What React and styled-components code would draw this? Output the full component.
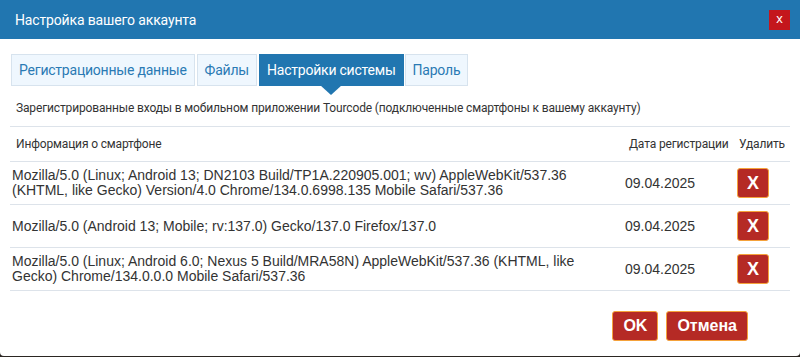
import React from 'react';
import styled, { createGlobalStyle } from 'styled-components';

const GlobalStyle = createGlobalStyle`
    html, body {
        margin: 0;
        padding: 0;
        background-color: #2b2622;
    }
    * { box-sizing: border-box; }
`;

const Dialog = styled.div`
    width: 800px;
    height: 356px;
    background-color: #ffffff;
    border-radius: 0 0 4px 4px;
    overflow: hidden;
    font-family: Roboto, "Liberation Sans", Arial, sans-serif;
    letter-spacing: -0.15px;
    color: #333333;
`;

const Header = styled.div`
    height: 39px;
    padding: 0 10px 0 15px;
    display: flex;
    align-items: center;
    justify-content: space-between;
    background-color: #2176b0;
    color: #ffffff;
    font-size: 14px;
`;

const CloseButton = styled.button`
    width: 21px;
    height: 20px;
    padding: 0 0 2px;
    border: 0;
    background-color: #c4161c;
    color: #ffffff;
    font-family: "Liberation Sans", Arial, sans-serif;
    font-size: 13px;
    line-height: 18px;
    cursor: pointer;
`;

const Body = styled.div`
    padding: 15px 10px 0;
`;

const Tabs = styled.div`
    display: flex;
    gap: 2px;
    padding-left: 1px;
`;

const Tab = styled.div`
    position: relative;
    height: 32px;
    padding: 0 7px;
    display: flex;
    align-items: center;
    font-size: 14px;
    letter-spacing: -0.22px;
    border: 1px solid ${(p) => (p.$active ? '#2176b0' : '#d7e3ee')};
    background-color: ${(p) => (p.$active ? '#2176b0' : '#eff7fe')};
    color: ${(p) => (p.$active ? '#ffffff' : '#2a7ab4')};

    ${(p) => p.$active && `
        margin-right: -1px;
        &::after {
            content: '';
            position: absolute;
            left: 50%;
            bottom: -10px;
            transform: translateX(-50%);
            border-left: 11px solid transparent;
            border-right: 11px solid transparent;
            border-top: 10px solid #2176b0;
        }
    `}
`;

const Subtitle = styled.div`
    height: 40px;
    padding: 4px 6px 0;
    display: flex;
    align-items: center;
    font-size: 12px;
`;

const Table = styled.div`
    border-top: 1px solid #dde3ea;
`;

const Row = styled.div`
    display: grid;
    grid-template-columns: 1fr 112px 57px;
    align-items: center;
    height: ${(p) => (p.$head ? '35px' : '43px')};
    border-bottom: 1px solid #dde3ea;
`;

const HeadCell = styled.div`
    font-size: 12px;
    padding-left: ${(p) => p.$pad || 6}px;
    white-space: nowrap;
`;

const Cell = styled.div`
    font-family: "Liberation Sans", Arial, sans-serif;
    font-size: 14px;
    line-height: 15px;
    letter-spacing: 0;
    padding-left: ${(p) => p.$pad || 2}px;
    padding-right: ${(p) => p.$right || 0}px;
`;

const RedButton = styled.button`
    height: ${(p) => p.$h || 30}px;
    padding: 0 ${(p) => p.$px || 9}px;
    border: 1px solid #f5a23a;
    border-radius: 3px;
    background-color: #b52a25;
    color: #ffffff;
    font-family: "Liberation Sans", Arial, sans-serif;
    font-weight: 700;
    font-size: ${(p) => p.$fs || 18}px;
    cursor: pointer;
`;

const Footer = styled.div`
    display: flex;
    justify-content: flex-end;
    gap: 8px;
    padding: 20px 42px 0 0;
`;

const devices = [
    {
        info: 'Mozilla/5.0 (Linux; Android 13; DN2103 Build/TP1A.220905.001; wv) AppleWebKit/537.36 (KHTML, like Gecko) Version/4.0 Chrome/134.0.6998.135 Mobile Safari/537.36',
        date: '09.04.2025',
    },
    {
        info: 'Mozilla/5.0 (Android 13; Mobile; rv:137.0) Gecko/137.0 Firefox/137.0',
        date: '09.04.2025',
    },
    {
        info: 'Mozilla/5.0 (Linux; Android 6.0; Nexus 5 Build/MRA58N) AppleWebKit/537.36 (KHTML, like Gecko) Chrome/134.0.0.0 Mobile Safari/537.36',
        date: '09.04.2025',
    },
];

const tabs = ['Регистрационные данные', 'Файлы', 'Настройки системы', 'Пароль'];

const App = () => {
    return (
        <Dialog>
            <GlobalStyle />
            <Header>
                <span>Настройка вашего аккаунта</span>
                <CloseButton>x</CloseButton>
            </Header>

            <Body>
                <Tabs>
                    {tabs.map((t) => (
                        <Tab key={t} $active={t === 'Настройки системы'}>{t}</Tab>
                    ))}
                </Tabs>

                <Subtitle>
                    Зарегистрированные входы в мобильном приложении Tourcode (подключенные смартфоны к вашему аккаунту)
                </Subtitle>

                <Table>
                    <Row $head>
                        <HeadCell>Информация о смартфоне</HeadCell>
                        <HeadCell $pad={8}>Дата регистрации</HeadCell>
                        <HeadCell $pad={6}>Удалить</HeadCell>
                    </Row>
                    {devices.map((d, i) => (
                        <Row key={i}>
                            <Cell $right={40}>{d.info}</Cell>
                            <Cell $pad={4}>{d.date}</Cell>
                            <Cell $pad={4}>
                                <RedButton>X</RedButton>
                            </Cell>
                        </Row>
                    ))}
                </Table>

                <Footer>
                    <RedButton $h={30} $px={10} $fs={16}>OK</RedButton>
                    <RedButton $h={30} $px={10} $fs={16}>Отмена</RedButton>
                </Footer>
            </Body>
        </Dialog>
    );
};

export default App;
